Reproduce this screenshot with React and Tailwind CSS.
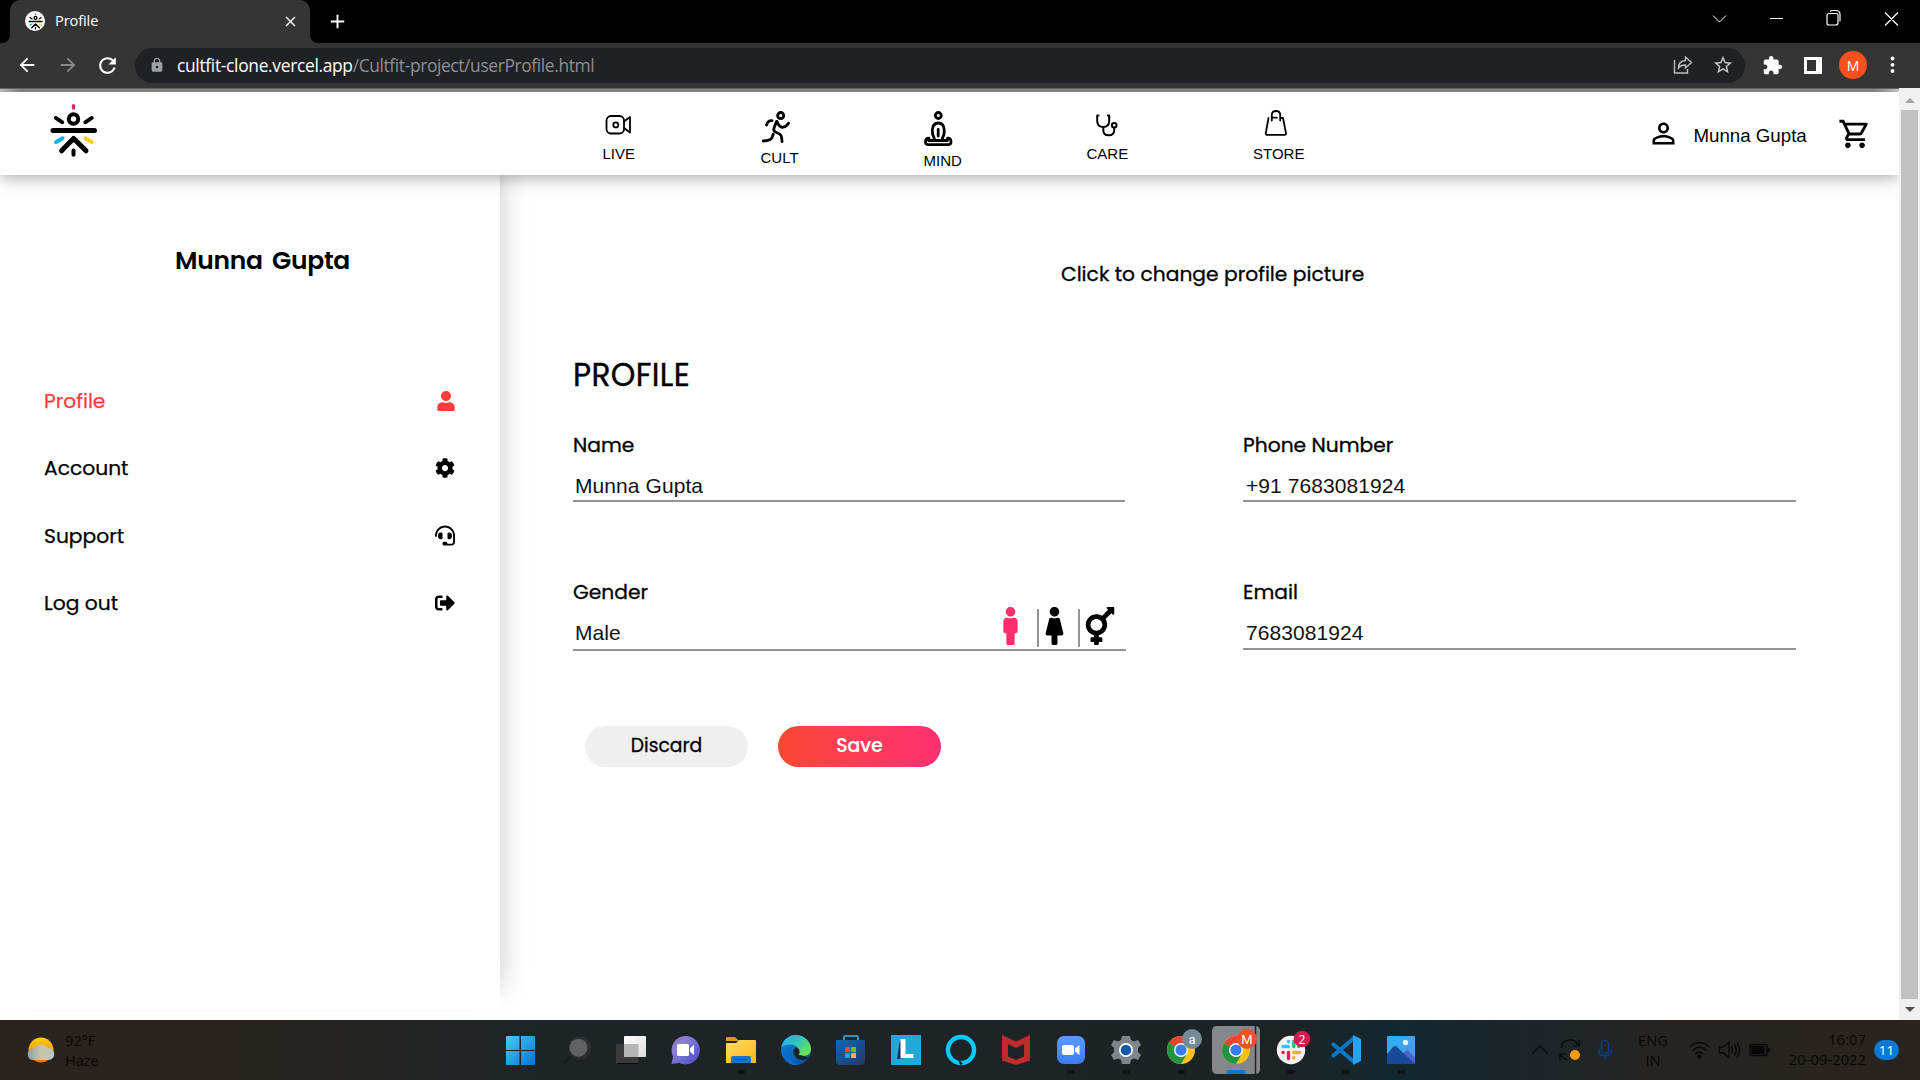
import React from "react";
import { FaUser, FaCog, FaHeadset, FaSignOutAlt, FaMale, FaFemale, FaTransgender } from "react-icons/fa";
import { MdPersonOutline, MdOutlineShoppingCart, MdStarBorder, MdExtension, MdLock, MdRefresh, MdArrowBack, MdArrowForward, MdClose, MdAdd } from "react-icons/md";

const poppins = "font-['Poppins','Inter',sans-serif] [font-feature-settings:'cv11'] whitespace-nowrap";
const arial = "font-['Arial','Liberation_Sans',sans-serif] whitespace-nowrap";
const segoe = "font-['Segoe_UI','Open_Sans','Noto_Sans',sans-serif] whitespace-nowrap";

function Mark({ className, viewBox }) {
  return (
    <svg className={className} viewBox={viewBox} fill="none" strokeLinecap="round" strokeLinejoin="round">
      <path d="M23.500 2.600v2.400" stroke="#e0246e" strokeWidth="3.400" />
      <circle cx="23.500" cy="16" r="4.700" stroke="#000" strokeWidth="4" />
      <path d="M5.800 14.900l6.600 4.400M41.800 14.900l-6.600 4.400" stroke="#000" strokeWidth="3.800" />
      <path d="M3 27.500h41.500" stroke="#000" strokeWidth="5" />
      <path d="M12.400 35.300l-6.400 3.900" stroke="#00b2e3" strokeWidth="3.900" />
      <path d="M35.600 35.300l6.200 3.900" stroke="#ffcb1f" strokeWidth="3.900" />
      <path d="M11.600 47.800l12-12.300 12.400 12.300" stroke="#000" strokeWidth="5" />
      <path d="M23.500 47.500v4.200" stroke="#000" strokeWidth="4" />
    </svg>
  );
}

function TabStrip() {
  return (
    <div className="flex h-[43px] bg-black text-white">
      <div className="flex w-[10px] items-end bg-[#353535]">
        <div className="h-full w-full rounded-br-[8px] bg-black" />
      </div>
      <div className="flex h-[43px] w-[300px] items-center rounded-t-[10px] bg-[#353535] pl-[15px] pr-[11px] pb-px">
        <div className="flex h-5 w-5 items-center justify-center rounded-full bg-white">
          <Mark className="h-[17px] w-[17px]" viewBox="0 0 47 55" />
        </div>
        <div className={`${segoe} ml-[10px] flex-1 text-[14.6px] tracking-[-0.1px]`}>Profile</div>
        <MdClose className="h-[17px] w-[17px]" />
      </div>
      <div className="w-[10px] bg-[#353535]">
        <div className="h-full w-full rounded-bl-[8px] bg-black" />
      </div>
      <MdAdd className="ml-[6px] mt-[10px] h-[23px] w-[23px]" />
      <div className="flex-1" />
      <svg className="mt-[8px] h-[22px] w-[220px]" viewBox="0 0 220 22" fill="none" stroke="#fff" strokeWidth="1.2">
        <path d="M13 7.500l6.500 6.500 6.500-6.500" strokeWidth="1" />
        <path d="M70 10.500h13M131 5.500h-1.500q-2.500 0-2.500 2v7.500q0 2 2 2h6.500q2.500 0 2.500-2v-8q0-1.500-2-1.500zM130 3.500q1-1 3-1h3q4 0 4 4v7M185 4.500l13 13M198 4.500l-13 13" />
      </svg>
    </div>
  );
}

function Toolbar() {
  return (
    <div className="flex h-[45px] items-center bg-[#353535] pb-px">
      <MdArrowBack className="ml-[16px] h-[22px] w-[22px] text-white" />
      <MdArrowForward className="ml-[19px] h-[22px] w-[22px] text-[#8a8a8a]" />
      <MdRefresh className="ml-[16px] h-[25px] w-[25px] text-white" />
      <div className="ml-[15px] flex h-[35px] w-[1610px] items-center rounded-full bg-[#202124] pl-[14px] pr-[11px]">
        <MdLock className="h-[16px] w-[16px] text-[#9aa0a6]" />
        <div className={`${segoe} ml-[12px] flex-1 text-[17.4px] text-[#8d8f92]`}>
          <span className="tracking-[-0.32px] text-white">cultfit-clone.vercel.app</span>
          <span className="tracking-[-0.38px]">/Cultfit-project/userProfile.html</span>
        </div>
        <svg className="h-5 w-5" viewBox="0 0 20 20" fill="none" stroke="#bdbdbd" strokeWidth="1.4">
          <path d="M1.500 5v13h13v-4M5.500 13q0-7 7-7.500V2l6 5.500-6 5.500v-3q-5 0-7 3z" />
        </svg>
        <MdStarBorder className="ml-[19px] h-[22px] w-[22px] text-[#c8c8c8]" />
      </div>
      <MdExtension className="ml-[17px] h-[21px] w-[21px] text-white" />
      <div className="ml-[21px] h-[17px] w-[18px] border-y-[3px] border-l-[3px] border-r-[6px] border-white" />
      <div className={`${segoe} ml-[17px] flex h-7 w-7 items-center justify-center rounded-full bg-[#f4511e] text-[14px] text-white`}>M</div>
      <svg className="ml-[23px] h-[18px] w-[5px]" viewBox="0 0 5 18" fill="#fff">
        <circle cx="2.500" cy="2.500" r="1.900" /><circle cx="2.500" cy="8.800" r="1.900" /><circle cx="2.500" cy="15" r="1.900" />
      </svg>
    </div>
  );
}

const navItems = [
  { label: "LIVE", box: "h-[38px]", vb: "0 0 40 38", w: "1.8", art: (
    <><rect x="3.500" y="8" width="17.500" height="17.500" rx="4.500" /><circle cx="12.800" cy="16.900" r="2.500" /><path d="M21 13.500l6-4.500v15.500l-6-4.500" /></>
  ) },
  { label: "CULT", box: "h-[42px]", vb: "0 0 40 42", w: "2.8", art: (
    <><circle cx="19.700" cy="7.600" r="3.100" /><path d="M16 13.500q2 5.500 5.500 5.800 3.500 0 6-4M11 12.700q-4.500-.2-5.500 4.500M15.500 13.500L13 20q-1 3 2.500 4.500 4.500 1.500 5 4.500l.6 4.600M12.200 26.200q-.8 4-3 5.200-3 1.400-7 1.600" /></>
  ) },
  { label: "MIND", box: "h-[45px]", vb: "0 0 40 45", w: "2.800", art: (
    <><circle cx="14.300" cy="7.500" r="3" /><path d="M10.300 30.500q-2.300-4-2-8 .3-7.500 6-7.500t6 7.500q.3 4-2 8M14.200 21.500v6.500M5 30.200q-3.500-.2-3.500 3.500 0 3 3 3h19.500q3 0 3-3 0-3.700-3.500-3.500M4.500 32.500h19" /></>
  ) },
  { label: "CARE", box: "h-[38px]", vb: "0 0 40 38", w: "2", art: (
    <><path d="M11.500 7.500h-1.300v5q0 6.500 6 6.500t6-6.500v-5h-1.300M16.300 19v3q0 5.300 5.300 5.300 5.600 0 5.600-5.300v-2.300" /><circle cx="27.200" cy="17.200" r="2.300" /></>
  ) },
  { label: "STORE", box: "h-[38px]", vb: "0 0 40 38", w: "1.800", art: (
    <path d="M15.500 10l-2.700 15.200q-.2 1.600 1.200 1.600h17.800q1.400 0 1.200-1.600L30 10h-1.500M18.800 12.500V7q0-4 4.200-4t4.200 4v5.500M18.800 9.700h5" />
  ) },
];

function SiteHeader() {
  return (
    <header className="relative z-20 flex h-[83px] shrink-0 bg-white pl-[50px] text-black shadow-[0_2px_16px_rgba(0,0,0,0.36)]">
      <Mark className="mt-[11px] h-[55px] w-[47px]" viewBox="0 0 47 55" />
      <nav className="ml-[505.500px] mt-4 grid grid-cols-[158px_163px_163px_166.500px_60px]">
        {navItems.map((n) => (
          <a key={n.label} className="flex flex-col items-start">
            <svg className={`${n.box} w-10`} viewBox={n.vb} fill="none" stroke="#000" strokeWidth={n.w} strokeLinecap="round" strokeLinejoin="round">{n.art}</svg>
            <span className={`${arial} text-[15px] leading-4`}>{n.label}</span>
          </a>
        ))}
      </nav>
      <MdPersonOutline className="ml-[333.500px] mt-[25px] h-[33px] w-[33px]" />
      <span className={`${arial} ml-[14px] mt-[32px] text-[18.700px] leading-6`}>Munna Gupta</span>
      <MdOutlineShoppingCart className="ml-[31px] mt-[25px] h-[34px] w-[34px]" />
    </header>
  );
}

const menu = [
  { label: "Profile", Icon: FaUser, color: "text-[#ff3c3c]", size: "h-[20px] w-[18px]" },
  { label: "Account", Icon: FaCog, color: "text-black", size: "h-[20px] w-[20px]" },
  { label: "Support", Icon: FaHeadset, color: "text-black", size: "h-[21px] w-[20px]" },
  { label: "Log out", Icon: FaSignOutAlt, color: "text-black", size: "h-[20px] w-[20px]" },
];

function Sidebar() {
  return (
    <aside className="h-[834px] w-[500px] shrink-0 bg-white pl-[44px] pr-[45px] pt-[71px] shadow-[0_-22px_28px_rgba(0,0,0,0.22)]">
      <h2 className={`${poppins} ml-[131px] text-[25px] font-semibold leading-[30px] tracking-[-0.250px] [word-spacing:3.500px]`}>Munna Gupta</h2>
      <ul className="mt-[91px]">
        {menu.map(({ label, Icon, color, size }) => (
          <li key={label} className={`${color} flex h-[67.500px] items-center justify-between`}>
            <span className={`${poppins} text-[20.250px] font-normal leading-[30px] [-webkit-text-stroke:0.250px]`}>{label}</span>
            <Icon className={size} />
          </li>
        ))}
      </ul>
    </aside>
  );
}

function Field({ label, value, children, line, width = "w-[552px]", inset = "ml-[2px]" }) {
  return (
    <div className={width}>
      <div className={`${poppins} text-[20.250px] font-normal leading-[30px] [-webkit-text-stroke:0.300px]`}>{label}</div>
      <div className={`${line} flex items-start justify-between border-b-2 border-[#959595]`}>
        <span className={`${arial} ${inset} mt-[11px] text-[21px] leading-[30px] tracking-[0.080px] text-[#111]`}>{value}</span>
        {children}
      </div>
    </div>
  );
}

function ProfileForm() {
  return (
    <main className="flex-1 pl-[73px] pt-[84px] text-black">
      <div className={`${poppins} ml-[488px] text-[20.250px] font-normal leading-[30px] [-webkit-text-stroke:0.300px]`}>Click to change profile picture</div>
      <h1 className={`${poppins} mt-[66px] text-[31.250px] font-normal leading-[40px] tracking-[0.350px] [-webkit-text-stroke:0.400px]`}>PROFILE</h1>
      <div className="mt-[35px] grid grid-cols-[670px_553px] gap-y-[75px]">
        <Field label="Name" value="Munna Gupta" line="h-[42px]" />
        <Field label="Phone Number" value="+91 7683081924" line="h-[42px]" width="w-[553px]" inset="ml-[3px]" />
        <Field label="Gender" value="Male" line="h-[44px]" width="w-[553px]">
          <div className="flex h-[38px] text-black">
            <FaMale className="h-[38px] w-[15px] text-[#ff2f6d]" />
            <div className="ml-[19px] mt-[2px] h-[38px] w-0.5 bg-[#959595]" />
            <FaFemale className="ml-[6px] h-[38px] w-[19px]" />
            <div className="ml-[14px] mt-[2px] h-[38px] w-0.5 bg-[#959595]" />
            <FaTransgender className="ml-[5px] mr-[11px] h-[38px] w-[30px]" />
          </div>
        </Field>
        <Field label="Email" value="7683081924" line="h-[43px]" width="w-[553px]" inset="ml-[3px]" />
      </div>
      <div className={`${poppins} mt-[75px] flex gap-[30px] pl-[12px] text-[18.750px]`}>
        <button className="h-[41px] w-[163px] rounded-full bg-[#efefef] font-normal [-webkit-text-stroke:0.300px]">Discard</button>
        <button className="h-[41px] w-[163px] rounded-full bg-linear-to-r from-[#fa4731] to-[#ff2e72] font-medium text-white [-webkit-text-stroke:0.200px]">Save</button>
      </div>
    </main>
  );
}

function Scrollbar() {
  return (
    <div className="flex w-[21px] flex-col items-center bg-[#f1f1f1] pt-[9px]">
      <svg className="h-[6px] w-[10px]" viewBox="0 0 10 6"><path d="M0 6l5-5 5 5z" fill="#a3a3a3" /></svg>
      <div className="mt-[7px] h-[889px] w-[17px] bg-[#c1c1c1]" />
      <svg className="mt-[8px] h-[6px] w-[10px]" viewBox="0 0 10 6"><path d="M0 0l5 5 5-5z" fill="#505050" /></svg>
    </div>
  );
}

function Chrome({ letter, color }) {
  return (
    <>
      <circle cx="28" cy="30" r="14" fill="#fbc116" />
      <path d="M28 30L15.900 23A14 14 0 0 1 40.100 23L28 23z" fill="#ea4335" />
      <path d="M28 30L15.900 23A14 14 0 0 0 28 44L34 33.500z" fill="#229342" />
      <path d="M28 30L40.100 23H28z" fill="#fbc116" />
      <circle cx="28" cy="30" r="7" fill="#fff" /><circle cx="28" cy="30" r="5.600" fill="#3b7bf0" />
      <circle cx="39" cy="19" r="10" fill={color} />
      <text x="39" y="23.500" textAnchor="middle" fontSize="13" fill="#fff" fontFamily="Roboto, sans-serif">{letter}</text>
    </>
  );
}

const apps = [
  <g>
    <defs><linearGradient id="win" x1="0" y1="0" x2="1" y2="1"><stop offset="0" stopColor="#4cc9fa" /><stop offset="1" stopColor="#0373d4" /></linearGradient></defs>
    <path d="M13 17q0-1 1-1h12.500v14H13zM28 16h13q1 0 1 1v13H28zM13 31h13.500v14H14q-1 0-1-1zM28 31h14v13q0 1-1 1H28z" fill="url(#win)" />
  </g>,
  <g><circle cx="32" cy="27.500" r="11.500" fill="#2e2e2e" /><circle cx="30.500" cy="27.700" r="9" fill="#606264" /><path d="M22 37l-6 6" stroke="#1a1a1a" strokeWidth="3" /></g>,
  <g>
    <defs><linearGradient id="tv" x1="0" y1="0" x2="1" y2="1"><stop offset="0" stopColor="#fff" /><stop offset="1" stopColor="#dedede" /></linearGradient></defs>
    <rect x="13" y="24" width="22" height="20" rx="1" fill="#3a3a3a" /><path d="M14 43h21v1H14z" fill="#0a0a0a" />
    <rect x="21" y="16" width="22" height="21" rx="1" fill="url(#tv)" /><rect x="21" y="24" width="14.500" height="13" rx="1" fill="#b5b5b5" />
  </g>,
  <g>
    <defs><linearGradient id="chat" x1="0" y1="0" x2="1" y2="1"><stop offset="0" stopColor="#8f6db0" /><stop offset="0.300" stopColor="#8a7fd8" /><stop offset="1" stopColor="#4a4dc8" /></linearGradient></defs>
    <path d="M27.500 16a14.200 14.200 0 1 1-6 27l-8 1 1.500-7.500A14.200 14.200 0 0 1 27.500 16z" fill="url(#chat)" />
    <rect x="19" y="24" width="12" height="12" rx="1.500" fill="#fff" /><path d="M32 28.500l4-3.500v10l-4-3.500z" fill="#fff" />
  </g>,
  <g>
    <path d="M13 18q0-1 1-1h8l4 4h-13z" fill="#dd9a05" />
    <defs><linearGradient id="fold" x1="0" y1="0" x2="1" y2="1"><stop offset="0" stopColor="#ffdc6b" /><stop offset="1" stopColor="#fbb90f" /></linearGradient></defs>
    <path d="M13 23h10l3-3h16q1 0 1 1v22H13z" fill="url(#fold)" />
    <path d="M18 43v-5q0-2 2-2h16q2 0 2 2v5z" fill="#1375cc" /><path d="M22 39.500h12" stroke="#0b4f96" strokeWidth="1" />
  </g>,
  <g>
    <defs>
      <linearGradient id="eg" x1="0" y1="0" x2="1" y2="0.700"><stop offset="0" stopColor="#28a8ea" /><stop offset="0.500" stopColor="#2fc4c0" /><stop offset="1" stopColor="#6fe44a" /></linearGradient>
      <linearGradient id="eb" x1="0" y1="0" x2="1" y2="1"><stop offset="0" stopColor="#0d84dc" /><stop offset="1" stopColor="#0c4a96" /></linearGradient>
    </defs>
    <circle cx="28" cy="30" r="15" fill="url(#eb)" />
    <path d="M13.300 27A15 15 0 0 1 43 29q0 7-8 7-4 0-5.500-1 2.500-2.500 1-6-2-4-7-4.500-6-.5-10.200 2.500z" fill="url(#eg)" />
    <path d="M28 27.500q-3.500 2-2.500 6 2 6 9 6.500 3.500 0 6.500-2.500-2 0-5-1.500-4-1-5.500-1 2-2 .5-5.500-1-2-3-2z" fill="#1c2227" />
    <path d="M24 26q-5 5-2 12 3 6 9 6.800Q21 46.500 16 38q-2-7 8-12z" fill="#0a6cc8" />
  </g>,
  <g>
    <defs><linearGradient id="store" x1="0" y1="0" x2="1" y2="1"><stop offset="0" stopColor="#0a68bd" /><stop offset="1" stopColor="#263861" /></linearGradient></defs>
    <path d="M21 21v-4q0-1 1-1h12q1 0 1 1v4" fill="none" stroke="#2fb4f0" strokeWidth="1.600" />
    <path d="M13 21q0-1 1-1h27q1 0 1 1v20q0 4-4 4H17q-4 0-4-4z" fill="url(#store)" />
    <path d="M22 27h5v5h-5z" fill="#f25022" /><path d="M28 27h5v5h-5z" fill="#7fba00" /><path d="M22 33h5v5h-5z" fill="#00a4ef" /><path d="M28 33h5v5h-5z" fill="#ffb900" />
  </g>,
  <g><rect x="13" y="15" width="30" height="30" fill="#22a9d8" /><path d="M22 20l-3 19 8-1z" fill="#062a5c" /><path d="M22.500 19h5v15h8v4h-13z" fill="#fff" /></g>,
  <g><circle cx="28" cy="30" r="13" fill="none" stroke="#00caff" strokeWidth="4.400" /><path d="M25 38l2 7 3-1z" fill="#1d2326" /></g>,
  <g><path d="M14 15l14 6.500L42 15v25.500L28 45l-14-4.500z" fill="#bf2b2d" /><path d="M20 24l8 4 8-4v12.500L28 40l-8-3.500z" fill="#1d2326" /></g>,
  <g>
    <defs><linearGradient id="zoom" x1="0" y1="0" x2="0" y2="1"><stop offset="0" stopColor="#5a9dff" /><stop offset="1" stopColor="#3b7cf5" /></linearGradient></defs>
    <rect x="14" y="16" width="28" height="28" rx="7" fill="url(#zoom)" /><rect x="19" y="25" width="12" height="10" rx="2" fill="#fff" /><path d="M32 28.500l4.500-3.500v10L32 31.500z" fill="#fff" />
  </g>,
  <g>
    <path d="M24 16h8l1 4 3 1.500 4-1.500 3 5-3 3v4l3 3-3 5-4-1.500-3 1.500-1 4h-8l-1-4-3-1.500-4 1.500-3-5 3-3v-4l-3-3 3-5 4 1.500 3-1.500z" fill="#7e868c" />
    <circle cx="28" cy="30" r="7" fill="#fff" /><circle cx="28" cy="30" r="5.300" fill="#0d5ba8" />
  </g>,
  <Chrome letter="a" color="#758b98" />,
  <g>
    <path d="M9 6h38q5 0 5 5v38q0 5-5 5H9q-5 0-5-5V11q0-5 5-5z" fill="#85888a" /><path d="M47.500 6v48" stroke="#202427" strokeWidth="1.500" />
    <Chrome letter="M" color="#f4511e" />
    <rect x="18" y="50" width="20" height="4" rx="2" fill="#0a78d4" />
  </g>,
  <g>
    <circle cx="28" cy="30" r="14.200" fill="#f4f4f4" />
    <g strokeWidth="3.400" strokeLinecap="round">
      <path d="M25.500 26.500h-5.500M25.500 21.500v.2" stroke="#36c5f0" />
      <path d="M30.800 21.500v5M35.700 26.500h.2" stroke="#2eb67d" />
      <path d="M30.800 32.500h6M30.800 37.700v.2" stroke="#ecb22e" />
      <path d="M25.500 32.500v6M20 32.500h.2" stroke="#e01e5a" />
    </g>
    <circle cx="39" cy="19" r="8.300" fill="#d8184f" /><text x="39" y="23.500" textAnchor="middle" fontSize="12" fill="#fff" fontFamily="Open Sans, sans-serif">2</text>
  </g>,
  <g fill="none" strokeLinejoin="round" strokeLinecap="round">
    <path d="M15.500 24.500L35 41M15.500 35.500L35 19" stroke="#0a78c4" strokeWidth="4.200" />
    <path d="M35 15l8 4v22l-8 4z" fill="#27a3f0" />
    <path d="M35 22v16l-9-8z" fill="#1d2629" />
  </g>,
  <g>
    <defs><linearGradient id="ph" x1="0" y1="0" x2="1" y2="1"><stop offset="0" stopColor="#25b4f0" /><stop offset="1" stopColor="#5a8ef0" /></linearGradient></defs>
    <rect x="14" y="16" width="28" height="28" rx="1" fill="url(#ph)" /><circle cx="32.500" cy="22.500" r="2.700" fill="#e9fbff" />
    <path d="M30 34l4-4.500 8 8V44H30z" fill="#4a64c8" /><path d="M14 34l6-7q2-2 4 0L42 44H14z" fill="#164a96" />
  </g>,
];
const running = [4, 10, 11, 12, 14, 15, 16];

function Taskbar() {
  return (
    <footer className={`${segoe} flex h-[60px] bg-[linear-gradient(90deg,#29241f_0%,#29241f_11%,#1f2426_27%,#1e2325_55%,#1c2426_67%,#132830_73%,#1c2529_79%,#272422_87%,#29241f_100%)]`}>
      <svg className="ml-[26px] mt-[15px] h-[30px] w-[30px]" viewBox="0 0 30 30">
        <defs>
          <linearGradient id="sun" x1="0" y1="0" x2="0" y2="1"><stop offset="0" stopColor="#ffd000" /><stop offset="1" stopColor="#f2700c" /></linearGradient>
          <linearGradient id="cloud" x1="0" y1="0" x2="1" y2="0"><stop offset="0" stopColor="#8d9fb4" /><stop offset="0.500" stopColor="#c9c6a8" /><stop offset="1" stopColor="#b9c2cb" /></linearGradient>
        </defs>
        <circle cx="15" cy="15" r="12.500" fill="url(#sun)" />
        <path d="M6 25a6 6 0 0 1 0-11.500h2.500a7.500 7.500 0 0 1 13-.5 6 6 0 0 1 1.500 12z" fill="url(#cloud)" />
      </svg>
      <div className="ml-[9px] mt-[10px] w-[428px] text-[14.700px] leading-[20px] tracking-[-0.200px] text-[#070605]">
        <div>92°F</div>
        <div>Haze</div>
      </div>
      <div className="flex">
        {apps.map((art, i) => (
          <svg key={i} className="h-[60px] w-[55px] overflow-visible" viewBox="0 0 55 60">
            {art}
            {running.includes(i) && <rect x="24" y="50" width="8" height="4" rx="2" fill="#101213" />}
          </svg>
        ))}
      </div>
      <svg className="ml-[100px] mt-[16px] h-[28px] w-[90px]" viewBox="0 0 90 28" fill="none" stroke="#080808" strokeWidth="1.200">
        <path d="M4 18l8-8 8 8M33 12a9 9 0 0 1 17-3M51 4v6h-6M40 23.500q-6-1-7.500-5M32 24v-6h6" />
        <circle cx="47" cy="19" r="5" fill="#ff9a0c" stroke="none" />
        <g stroke="#0a3f8c" strokeWidth="1.600"><rect x="73.500" y="4.500" width="7" height="13" rx="3.500" /><path d="M70.500 13q0 7 6.500 7t6.500-7M77 20v4" /></g>
      </svg>
      <div className="ml-[17px] mt-[10px] w-[36px] text-center text-[14.700px] leading-[20px] text-[#070605]">
        <div>ENG</div>
        <div>IN</div>
      </div>
      <svg className="ml-[17px] mt-[16px] h-[28px] w-[88px]" viewBox="0 0 88 28" fill="none" stroke="#080808" strokeWidth="1.300">
        <path d="M1.500 11q10-9 20 0M4.500 14.500q7-6.500 14 0M7.500 18q4-4 8 0" /><circle cx="11.500" cy="20.500" r="1.500" fill="#080808" />
        <path d="M31.500 11v6h4l5.500 4.500V6.500L35.500 11zM43.500 10.500q2 3.500 0 7M46.500 8.500q3.500 5.500 0 11M49 6.500q5 7.500 0 15" />
        <rect x="62" y="8.500" width="17" height="11" rx="2" strokeWidth="1.500" /><rect x="64" y="10.500" width="12" height="7" fill="#080808" /><path d="M80.500 12v4" strokeWidth="2.500" />
      </svg>
      <div className="mt-[9px] w-[90px] text-right text-[14.700px] leading-[20px] tracking-[0.050px] text-[#070605]">
        <div>16:07</div>
        <div>20-09-2022</div>
      </div>
      <div className="ml-[8px] mt-[20px] flex h-5 w-[25px] items-center justify-center rounded-full bg-[#0a78d4] text-[13.500px] text-white">11</div>
    </footer>
  );
}

export default function App() {
  return (
    <div className="flex h-[1080px] w-[1920px] flex-col overflow-hidden bg-white">
      <TabStrip />
      <Toolbar />
      <div className="flex h-[932px]">
        <div className="flex w-[1899px] flex-col overflow-hidden">
          <div className="h-px bg-[#6b6b6b]" />
          <div className="h-[3px] bg-[linear-gradient(90deg,#c8c8c8,#959595_20px,#959595_1875px,#d0d0d0)]" />
          <SiteHeader />
          <div className="flex flex-1">
            <Sidebar />
            <ProfileForm />
          </div>
        </div>
        <Scrollbar />
      </div>
      <Taskbar />
    </div>
  );
}
